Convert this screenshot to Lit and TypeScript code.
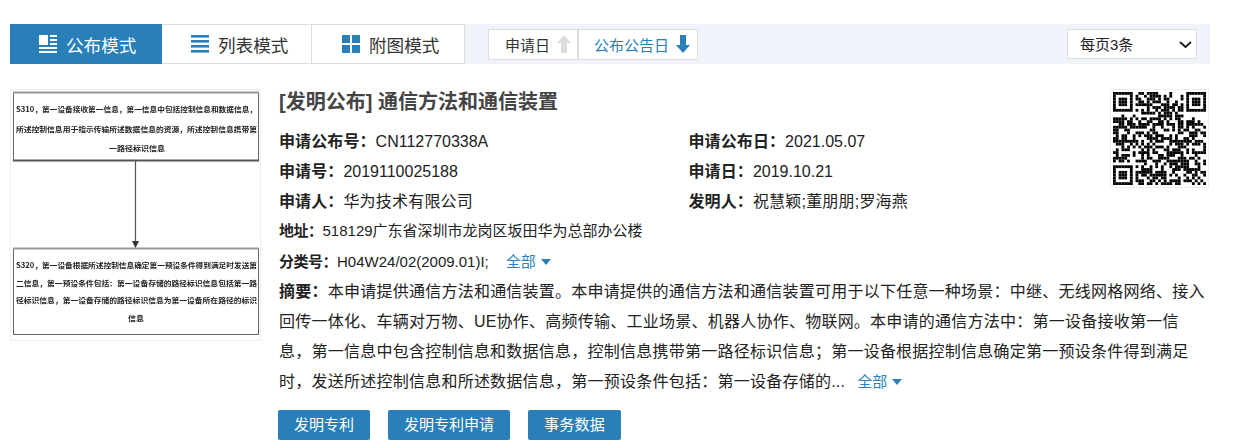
import { LitElement, html, css, svg } from "lit";
import { customElement } from "lit/decorators.js";

const QR_SIZE = 33;
function qrCells(): [number, number][] {
  const cells: [number, number][] = [];
  let seed = 20211;
  const rand = () => {
    seed = (seed * 1103515245 + 12345) & 0x7fffffff;
    return (seed >> 12) % 100;
  };
  const inFinder = (x: number, y: number, ox: number, oy: number) => x >= ox && x < ox + 8 && y >= oy && y < oy + 8;
  for (let y = 0; y < QR_SIZE; y++) {
    for (let x = 0; x < QR_SIZE; x++) {
      if (inFinder(x, y, 0, 0) || inFinder(x, y, QR_SIZE - 8, 0) || inFinder(x, y, 0, QR_SIZE - 8)) continue;
      if (rand() < 54) cells.push([x, y]);
    }
  }
  for (const [ox, oy] of [[0, 0], [QR_SIZE - 7, 0], [0, QR_SIZE - 7]]) {
    for (let y = 0; y < 7; y++) {
      for (let x = 0; x < 7; x++) {
        const edge = x === 0 || y === 0 || x === 6 || y === 6;
        const core = x >= 2 && x <= 4 && y >= 2 && y <= 4;
        if (edge || core) cells.push([ox + x, oy + y]);
      }
    }
  }
  return cells;
}

const ABSTRACT =
  "本申请提供通信方法和通信装置。本申请提供的通信方法和通信装置可用于以下任意一种场景：中继、无线网格网络、接入回传一体化、车辆对万物、UE协作、高频传输、工业场景、机器人协作、物联网。本申请的通信方法中：第一设备接收第一信息，第一信息中包含控制信息和数据信息，控制信息携带第一路径标识信息；第一设备根据控制信息确定第一预设条件得到满足时，发送所述控制信息和所述数据信息，第一预设条件包括：第一设备存储的...";

@customElement("app-root")
export class AppRoot extends LitElement {
  static styles = css`
    :host {
      display: block;
      font-family: "Liberation Sans", "Noto Sans CJK SC", sans-serif;
      color: #222;
      font-size: 16px;
      box-sizing: border-box;
      width: 1237px;
      height: 448px;
      padding: 24px 27px 0 10px;
      overflow: hidden;
    }
    .bar {
      display: flex;
      align-items: center;
      height: 40px;
      background: #f0f3fa;
    }
    .tabs { display: flex; height: 40px; }
    .tab {
      box-sizing: border-box;
      display: flex;
      align-items: center;
      gap: 9px;
      height: 40px;
      padding-left: 29px;
      background: #fff;
      color: #333;
      font-size: 17.6px;
      border: 1px solid #ddd;
      border-left: 0;
    }
    .tab.t1 { width: 152px; background: #2980b9; color: #fff; border: 0; }
    .tab.t2 { width: 150px; }
    .tab.t3 { width: 153px; padding-left: 30px; }
    .tab svg { width: 18px; height: 18px; display: block; flex: none; }
    .sort { display: flex; margin-left: 23px; height: 31px; }
    .sort-btn {
      box-sizing: border-box;
      display: flex;
      align-items: center;
      height: 31px;
      background: #fff;
      border: 1px solid #ddd;
      font-size: 15px;
      gap: 7px;
      color: #333;
    }
    .sort-btn.s1 { width: 90px; padding-left: 16px; }
    .sort-btn.s2 { width: 120px; padding-left: 15px; color: #2980b9; }
    .sort-btn svg { width: 14px; height: 20px; display: block; flex: none; }
    .select-wrap { position: relative; margin-left: auto; margin-right: 13px; width: 130px; height: 30px; }
    .select-wrap svg { position: absolute; left: 112px; top: 12px; width: 13px; height: 7px; pointer-events: none; }
    select {
      appearance: none;
      display: block;
      width: 130px;
      height: 30px;
      box-sizing: border-box;
      border: 1px solid #ddd;
      background: #fff;
      font: 15px "Liberation Sans", "Noto Sans CJK SC", sans-serif;
      color: #222;
      padding-left: 12px;
      border-radius: 0;
    }
    .item {
      display: flex;
      gap: 17px;
      margin-top: 25px;
    }
    .thumb { width: 251px; height: 252px; display: block; flex: none; }
    .body { flex: 1; min-width: 0; }
    .qr {
      float: right;
      box-sizing: border-box;
      width: 99px;
      height: 99px;
      margin-right: 1px;
      padding: 2px;
      border: 1px solid #eee;
      background: #fff;
    }
    .qr svg { display: block; width: 93px; height: 93px; }
    h1 {
      margin: 0 0 11px;
      padding-left: 1px;
      font-size: 20px;
      line-height: 26px;
      font-weight: 700;
      color: #444;
    }
    .fields { display: grid; grid-template-columns: 410px 410px; width: 820px; }
    .field { line-height: 32px; height: 30px; white-space: nowrap; padding-left: 1px; }
    .field.right { padding-left: 0.5px; }
    b { font-weight: 700; color: #222; }
    .field b { letter-spacing: 0.1px; }
    .zh { letter-spacing: 0.2px; }
    .small { font-size: 15px; height: 30px; line-height: 30px; white-space: nowrap; padding-left: 1px; }
    .small.lower { line-height: 32px; }
    .small b { letter-spacing: -0.5px; }
    .more {
      color: #2980b9;
      font-size: 15px;
      margin-left: 17px;
      display: inline-flex;
      align-items: center;
      gap: 5px;
      letter-spacing: 0;
    }
    .more.near { margin-left: 12px; }
    .caret {
      display: inline-block;
      width: 0;
      height: 0;
      border-left: 5px solid transparent;
      border-right: 5px solid transparent;
      border-top: 6px solid #2980b9;
    }
    .abstract { line-height: 30px; margin: 0; padding: 1px 0 0 1px; letter-spacing: 0.24px; }
    .actions { display: flex; gap: 18px; margin-top: 13px; }
    .action {
      box-sizing: border-box;
      height: 30px;
      line-height: 30px;
      padding: 0 16px;
      background: #2980b9;
      color: #fff;
      font-size: 15px;
      border-radius: 2px;
    }
    .action.wide { letter-spacing: 0.25px; }
  `;

  private figure() {
    const line = (x: number, y: number, w: number, t: string) =>
      svg`<text x=${x} y=${y} textLength=${w} lengthAdjust="spacingAndGlyphs">${t}</text>`;
    return html`<svg class="thumb" viewBox="0 0 251 252" role="img" aria-label="附图">
      <defs><filter id="soft" x="-5%" y="-5%" width="110%" height="110%"><feGaussianBlur stdDeviation="0.5" /></filter></defs>
      <rect x="0.5" y="0.5" width="250" height="251" fill="#fff" stroke="#eee" />
      <g fill="#fff" stroke="#666" filter="url(#soft)">
        <rect x="3.5" y="3.5" width="245" height="68" stroke-width="1" />
        <rect x="3.5" y="159.5" width="245" height="86" stroke-width="1" />
        <path d="M3 3.5H249" stroke="#999" stroke-width="2" />
        <path d="M3 71.5H249" stroke="#555" stroke-width="2" />
        <path d="M3 159.5H249" stroke="#999" stroke-width="2" />
      </g>
      <g filter="url(#soft)">
        <path d="M125.5 72V153" stroke="#555" stroke-width="1.2" fill="none" />
        <path d="M122 152H129L125.5 159Z" fill="#333" />
        <g font-family="'Noto Sans CJK SC', sans-serif" font-size="7.3" font-weight="700" fill="#222">
          ${line(6, 23, 241, "S310，第一设备接收第一信息，第一信息中包括控制信息和数据信息，")}
          ${line(6, 43, 241, "所述控制信息用于指示传输所述数据信息的资源，所述控制信息携带第")}
          ${line(99, 62, 56, "一路径标识信息")}
          ${line(6, 179, 241, "S320，第一设备根据所述控制信息确定第一预设条件得到满足时发送第")}
          ${line(6, 197, 241, "二信息，第一预设条件包括：第一设备存储的路径标识信息包括第一路")}
          ${line(6, 214, 241, "径标识信息，第一设备存储的路径标识信息为第一设备所在路径的标识")}
          ${line(118, 232, 16, "信息")}
        </g>
      </g>
    </svg>`;
  }

  render() {
    return html`
      <div class="bar">
        <div class="tabs">
          <div class="tab t1">
            <svg viewBox="0 0 18 18" fill="#fff"><rect x="0" y="0" width="9" height="10" /><rect x="11" y="0" width="7" height="2" /><rect x="11" y="4" width="7" height="2" /><rect x="11" y="8" width="7" height="2" /><rect x="0" y="12" width="18" height="2" /><rect x="0" y="16" width="18" height="2" /></svg>
            <span>公布模式</span>
          </div>
          <div class="tab t2">
            <svg viewBox="0 0 18 18" fill="#2980b9"><rect y="0" width="18" height="2.6" /><rect y="5" width="18" height="2.6" /><rect y="10" width="18" height="2.6" /><rect y="15" width="18" height="2.6" /></svg>
            <span>列表模式</span>
          </div>
          <div class="tab t3">
            <svg viewBox="0 0 18 18" fill="#2980b9"><rect y="0" width="8" height="8" /><rect x="10" y="0" width="8" height="8" /><rect y="10" width="8" height="8" /><rect x="10" y="10" width="8" height="8" /></svg>
            <span>附图模式</span>
          </div>
        </div>
        <div class="sort">
          <div class="sort-btn s1"><span>申请日</span>
            <svg viewBox="0 0 14 20" fill="#ddd"><path d="M7 1L14 9H10V19H4V9H0Z" /></svg>
          </div>
          <div class="sort-btn s2"><span>公布公告日</span>
            <svg viewBox="0 0 14 20" fill="#2980b9"><path d="M4 1H10V11H14L7 19L0 11H4Z" /></svg>
          </div>
        </div>
        <div class="select-wrap">
          <select aria-label="每页条数">
            <option>每页3条</option>
            <option>每页10条</option>
          </select>
          <svg viewBox="0 0 13 7" fill="none" stroke="#222" stroke-width="2"><path d="M1 1L6.5 6L12 1" /></svg>
        </div>
      </div>
      <div class="item">
        ${this.figure()}
        <div class="body">
          <div class="qr">
            <svg viewBox="0 0 33 33" fill="#000">
              ${qrCells().map(([x, y]) => svg`<rect x=${x} y=${y} width="1" height="1" />`)}
            </svg>
          </div>
          <h1>[发明公布] 通信方法和通信装置</h1>
          <div class="fields">
            <div class="field"><b>申请公布号：</b>CN112770338A</div>
            <div class="field right"><b>申请公布日：</b>2021.05.07</div>
            <div class="field"><b>申请号：</b>2019110025188</div>
            <div class="field right"><b>申请日：</b>2019.10.21</div>
            <div class="field"><b>申请人：</b><span class="zh">华为技术有限公司</span></div>
            <div class="field right"><b>发明人：</b><span class="zh">祝慧颖;董朋朋;罗海燕</span></div>
          </div>
          <div class="small"><b>地址：</b>518129广东省深圳市龙岗区坂田华为总部办公楼</div>
          <div class="small lower"><b>分类号：</b>H04W24/02(2009.01)I;<span class="more">全部<i class="caret"></i></span></div>
          <p class="abstract"><b>摘要：</b>${ABSTRACT}<span class="more near">全部<i class="caret"></i></span></p>
          <div class="actions">
            <div class="action">发明专利</div>
            <div class="action">发明专利申请</div>
            <div class="action wide">事务数据</div>
          </div>
        </div>
      </div>
    `;
  }
}
